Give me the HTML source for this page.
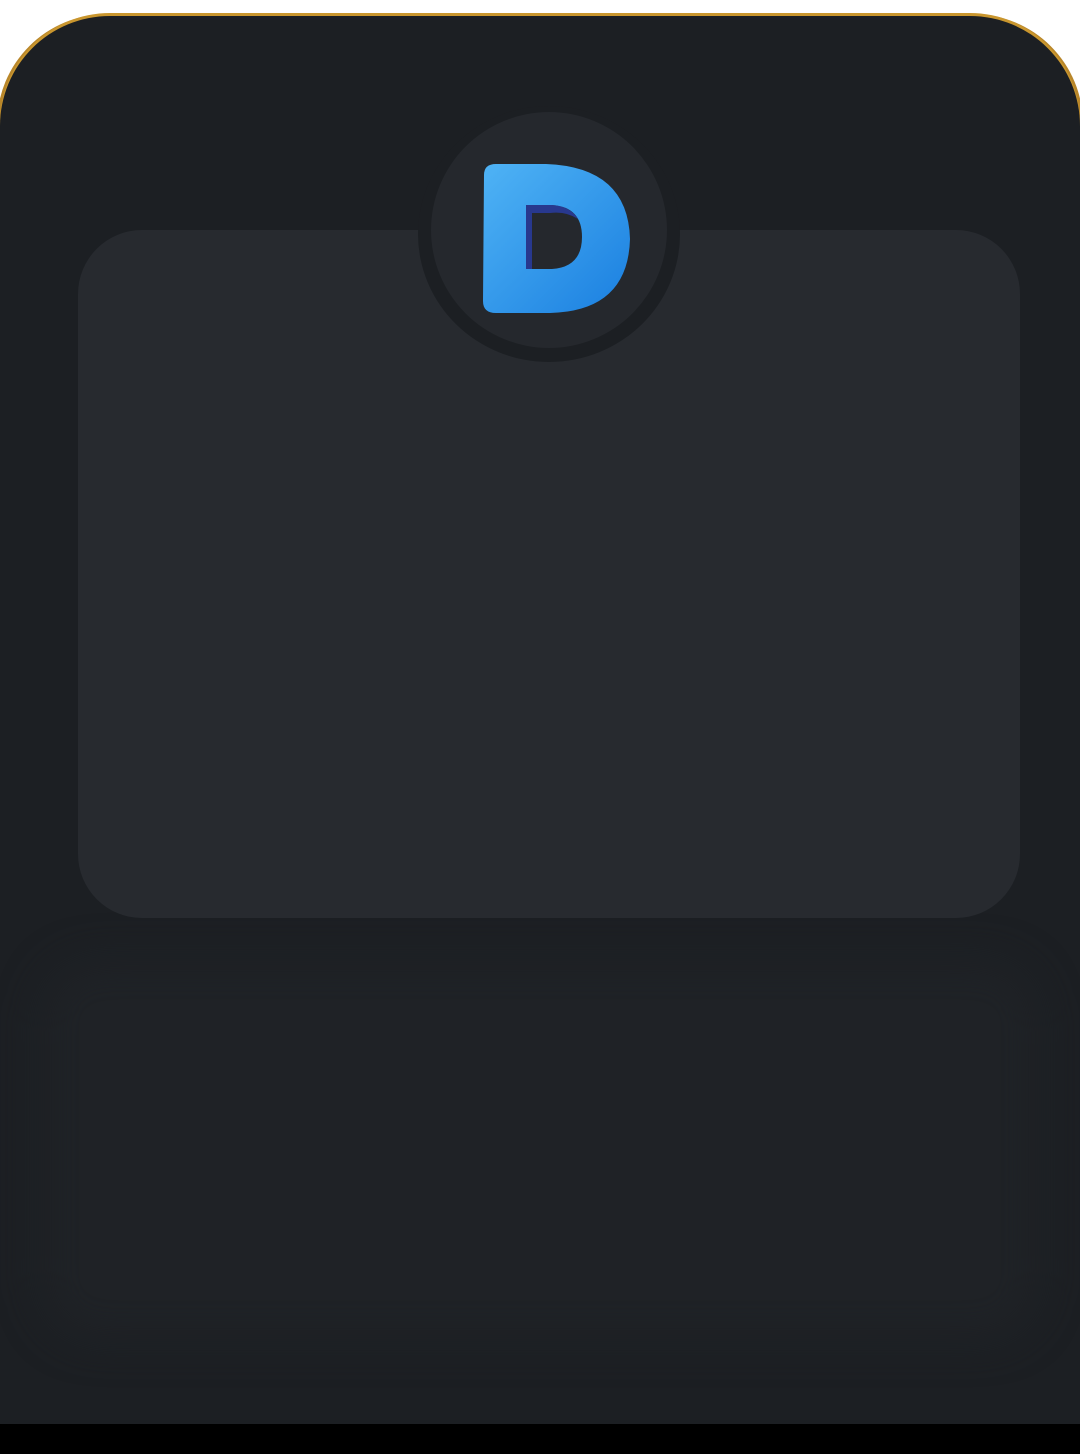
<!DOCTYPE html>
<html><head><style>
html,body{margin:0;padding:0;width:1080px;height:1454px;background:#fff;overflow:hidden;position:relative}
.card{position:absolute;left:0;top:16px;width:1080px;height:1408px;background:#1c1f23;border-radius:110px 110px 0 0;box-shadow:0 -3px 0 #c9962e, -3px -2px 0 #b8862a,3px -2px 0 #b8862a}
.bot{position:absolute;left:0;top:1424px;width:1080px;height:30px;background:#000}
.panel{position:absolute;left:78px;top:230px;width:942px;height:688px;background:#272a2f;border-radius:64px}
.lower{position:absolute;left:40px;top:960px;width:1000px;height:380px;background:#1f2226;border-radius:60px;filter:blur(20px)}
.ring{position:absolute;left:418px;top:106px;width:262px;height:256px;border-radius:50%;background:#1c1f23}
.circ{position:absolute;left:431px;top:112px;width:236px;height:236px;border-radius:50%;background:#25282d}
</style></head><body>
<div class="card"></div>
<div class="lower"></div>
<div class="panel"></div>
<div class="ring"></div>
<div class="circ"></div>
<svg style="position:absolute;left:470px;top:155px" width="170" height="170" viewBox="0 0 170 170">
<defs><linearGradient id="g" x1="0" y1="0" x2="1" y2="1"><stop offset="0" stop-color="#4fb3f5"/><stop offset="1" stop-color="#1a7fe0"/></linearGradient></defs>
<path fill-rule="evenodd" fill="url(#g)" d="M14 20 Q14 9 26 9 L76 9 Q158 12 160 84 Q158 156 80 158 L26 158 Q13 158 13 146 Z M56 50 L56 114 L82 114 Q112 112 112 82 Q112 52 82 50 Z"/>
<path fill="#2a3fb8" opacity=".7" d="M56 50 L82 50 Q100 51 108 64 Q96 56 80 58 L62 58 L62 114 L56 114Z"/>
</svg>
<div class="bot"></div>
</body></html>
